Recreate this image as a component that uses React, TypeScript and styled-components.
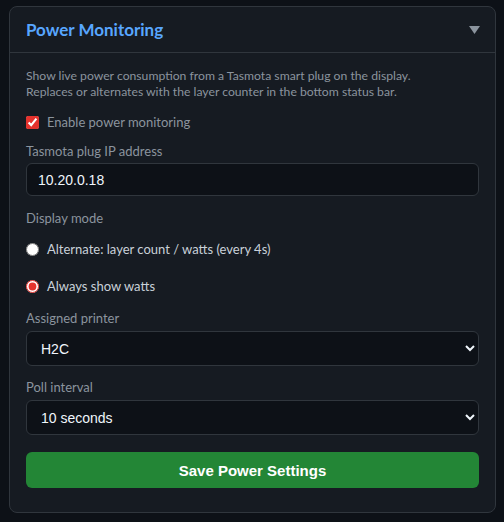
import React, { useState } from "react";
import styled, { createGlobalStyle } from "styled-components";

const GlobalStyle = createGlobalStyle`
  html, body {
    margin: 0;
    padding: 0;
    background: #0d1117;
  }
  body {
    font-family: Lato, "Open Sans", sans-serif;
  }
`;

const Page = styled.div`
  padding: 6px 8px 9px 9px;
`;

const Card = styled.section`
  background: #161b22;
  border: 1px solid #30363d;
  border-radius: 8px;
`;

const Header = styled.div`
  display: flex;
  align-items: center;
  justify-content: space-between;
  height: 45px;
  padding: 0 16px;
  border-bottom: 1px solid #30363d;
`;

const Title = styled.h2`
  margin: 0;
  font-size: 17px;
  font-weight: 700;
  color: #58a6ff;
`;

const Caret = styled.svg`
  display: block;
  width: 11px;
  height: 8px;
  margin-right: -1px;
  fill: #8b949e;
`;

const Body = styled.div`
  padding: 15px 16px 24px;
`;

const Description = styled.p`
  margin: 0;
  font-size: 12.2px;
  line-height: 16px;
  color: #8b949e;
`;

const CheckRow = styled.label<{ $top: number; $bright?: boolean }>`
  display: flex;
  align-items: center;
  gap: 8px;
  height: 18px;
  margin-top: ${(p) => p.$top}px;
  font-size: 13px;
  color: ${(p) => (p.$bright ? "#c9d1d9" : "#8b949e")};
  cursor: pointer;

  input {
    width: 13px;
    height: 13px;
    margin: 0;
    accent-color: #e5322d;
  }
`;

const FieldLabel = styled.div<{ $top: number }>`
  margin-top: ${(p) => p.$top}px;
  font-size: 13px;
  line-height: 18px;
  color: #8b949e;
`;

const TextInput = styled.input`
  display: block;
  box-sizing: border-box;
  width: 100%;
  height: 33px;
  margin-top: 3px;
  padding: 0 11px;
  background: #0d1117;
  border: 1px solid #30363d;
  border-radius: 6px;
  color: #f0f6fc;
  font-family: "Liberation Sans", Arial, sans-serif;
  font-size: 14px;
  outline: none;
`;

const Select = styled.select`
  display: block;
  box-sizing: border-box;
  width: 100%;
  height: 35px;
  margin-top: 4px;
  padding: 0 10px;
  background: #0d1117;
  border: 1px solid #30363d;
  border-radius: 6px;
  color: #f0f6fc;
  color-scheme: dark;
  font-family: "Liberation Sans", Arial, sans-serif;
  font-size: 14px;
  outline: none;
`;

const SaveButton = styled.button`
  display: block;
  width: 100%;
  height: 36px;
  margin-top: 17px;
  background: #238636;
  border: none;
  border-radius: 6px;
  color: #ffffff;
  font-family: "Liberation Sans", Arial, sans-serif;
  font-size: 15px;
  font-weight: 700;
  cursor: pointer;
`;

export default function App() {
  const [enabled, setEnabled] = useState(true);
  const [mode, setMode] = useState("watts");
  const [ip, setIp] = useState("10.20.0.18");
  const [printer, setPrinter] = useState("H2C");
  const [interval, setIntervalValue] = useState("10");

  return (
    <Page>
      <GlobalStyle />
      <Card>
        <Header>
          <Title>Power Monitoring</Title>
          <Caret viewBox="0 0 11 8">
            <polygon points="0,0 11,0 5.5,8" />
          </Caret>
        </Header>
        <Body>
          <Description>
            Show live power consumption from a Tasmota smart plug on the display.
            <br />
            Replaces or alternates with the layer counter in the bottom status bar.
          </Description>

          <CheckRow $top={13}>
            <input
              type="checkbox"
              checked={enabled}
              onChange={(e) => setEnabled(e.target.checked)}
            />
            Enable power monitoring
          </CheckRow>

          <FieldLabel $top={11}>Tasmota plug IP address</FieldLabel>
          <TextInput value={ip} onChange={(e) => setIp(e.target.value)} />

          <FieldLabel $top={13}>Display mode</FieldLabel>
          <CheckRow $top={13} $bright>
            <input
              type="radio"
              name="mode"
              checked={mode === "alternate"}
              onChange={() => setMode("alternate")}
            />
            Alternate: layer count / watts (every 4s)
          </CheckRow>
          <CheckRow $top={19} $bright>
            <input
              type="radio"
              name="mode"
              checked={mode === "watts"}
              onChange={() => setMode("watts")}
            />
            Always show watts
          </CheckRow>

          <FieldLabel $top={14}>Assigned printer</FieldLabel>
          <Select value={printer} onChange={(e) => setPrinter(e.target.value)}>
            <option value="H2C">H2C</option>
            <option value="X1C">X1C</option>
          </Select>

          <FieldLabel $top={12}>Poll interval</FieldLabel>
          <Select
            value={interval}
            onChange={(e) => setIntervalValue(e.target.value)}
          >
            <option value="5">5 seconds</option>
            <option value="10">10 seconds</option>
            <option value="30">30 seconds</option>
          </Select>

          <SaveButton>Save Power Settings</SaveButton>
        </Body>
      </Card>
    </Page>
  );
}
